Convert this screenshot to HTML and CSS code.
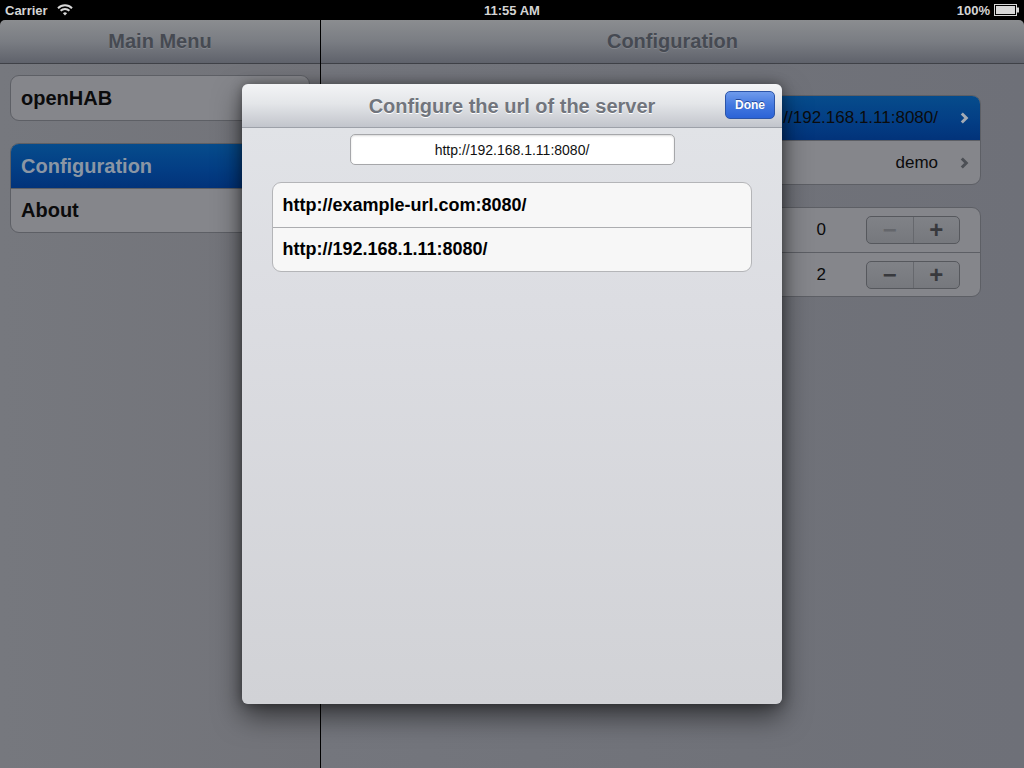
FILE: index.html
```html
<!DOCTYPE html>
<html>
<head>
<meta charset="utf-8">
<link rel="stylesheet" href="styles.css">
</head>
<body>
<div class="screen">
  <div class="statusbar">
    <div class="sb-left">
      <span>Carrier</span>
      <svg class="wifi" width="16" height="12" viewBox="0 0 16 12">
        <path d="M1 4.2 A10 10 0 0 1 15 4.2" fill="none" stroke="#d8d8d8" stroke-width="2"/>
        <path d="M3.6 6.8 A6.3 6.3 0 0 1 12.4 6.8" fill="none" stroke="#d8d8d8" stroke-width="2"/>
        <path d="M8 11.5 L5.9 9.2 A3 3 0 0 1 10.1 9.2 Z" fill="#d8d8d8"/>
      </svg>
    </div>
    <div class="sb-time">11:55 AM</div>
    <div class="sb-right">
      <span>100%</span>
      <svg class="battery" width="26" height="12" viewBox="0 0 26 12">
        <rect x="0.5" y="0.5" width="22" height="11" fill="none" stroke="#d8d8d8" stroke-width="1"/>
        <rect x="2" y="2" width="19" height="8" fill="#d8d8d8"/>
        <rect x="23" y="3.5" width="2" height="5" fill="#d8d8d8"/>
      </svg>
    </div>
  </div>
  <div class="main">
    <div class="pane left">
      <div class="navbar"><span class="navtitle">Main Menu</span></div>
      <div class="pane-body left-body">
        <div class="group">
          <div class="cell"><span class="cell-bold">openHAB</span></div>
        </div>
        <div class="group">
          <div class="cell selected"><span class="cell-bold sel-text">Configuration</span></div>
          <div class="cell"><span class="cell-bold">About</span></div>
        </div>
      </div>
    </div>
    <div class="divider"></div>
    <div class="pane right">
      <div class="navbar navbar-right"><span class="navtitle">Configuration</span></div>
      <div class="pane-body right-body">
        <div class="group rgroup">
          <div class="cell selected rcell">
            <span class="spacer"></span>
            <span class="cell-value">http://192.168.1.11:8080/</span>
            <svg class="chev" width="9" height="12" viewBox="0 0 9 12"><path d="M1.8 1.5 L6.3 6 L1.8 10.5" fill="none" stroke="#a3aab4" stroke-width="3"/></svg>
          </div>
          <div class="cell rcell">
            <span class="spacer"></span>
            <span class="cell-value">demo</span>
            <svg class="chev" width="9" height="12" viewBox="0 0 9 12"><path d="M1.8 1.5 L6.3 6 L1.8 10.5" fill="none" stroke="#4c4f55" stroke-width="3"/></svg>
          </div>
        </div>
        <div class="group rgroup">
          <div class="cell rcell">
            <span class="spacer"></span>
            <span class="cell-value num">0</span>
            <div class="stepper"><span class="st-btn dim">&minus;</span><span class="st-btn">+</span></div>
          </div>
          <div class="cell rcell">
            <span class="spacer"></span>
            <span class="cell-value num">2</span>
            <div class="stepper"><span class="st-btn">&minus;</span><span class="st-btn">+</span></div>
          </div>
        </div>
      </div>
    </div>
  </div>

  <div class="modal">
    <div class="modal-header">
      <span class="modal-title">Configure the url of the server</span>
      <span class="done">Done</span>
    </div>
    <div class="modal-body">
      <div class="field">http://192.168.1.11:8080/</div>
      <div class="mtable">
        <div class="mrow">http://example-url.com:8080/</div>
        <div class="mrow">http://192.168.1.11:8080/</div>
      </div>
    </div>
  </div>
</div>
</body>
</html>
```

FILE: styles.css
```css
* { box-sizing: border-box; }
html, body { margin: 0; padding: 0; }
body {
  width: 1024px;
  height: 768px;
  overflow: hidden;
  font-family: "Liberation Sans", Arial, sans-serif;
  background: #000;
}
.screen {
  position: relative;
  width: 1024px;
  height: 768px;
  display: flex;
  flex-direction: column;
}
.statusbar {
  height: 20px;
  background: #000;
  color: #d4d4d4;
  font-weight: bold;
  font-size: 13px;
  display: flex;
  align-items: center;
  justify-content: space-between;
  padding: 0 4px 0 5px;
  position: relative;
}
.sb-left { display: flex; align-items: center; gap: 9px; }
.wifi { margin-top: -1px; }
.sb-time {
  position: absolute;
  left: 0; right: 0;
  text-align: center;
  font-size: 13px;
}
.sb-right { display: flex; align-items: center; gap: 4px; }
.main {
  flex: 1;
  display: flex;
  background: #000;
}
.pane {
  display: flex;
  flex-direction: column;
}
.left { width: 320px; }
.divider { width: 1px; background: #000; }
.right { flex: 1; }
.navbar {
  height: 44px;
  background: linear-gradient(#8b8d90, #7a7d83 50%, #5f626b);
  border-bottom: 1px solid #3f4147;
  display: flex;
  align-items: center;
  justify-content: center;
  border-top-left-radius: 5px;
}
.navbar-right { border-top-left-radius: 0; border-top-right-radius: 5px; }
.navtitle {
  font-size: 20px;
  font-weight: bold;
  color: #464a52;
  text-shadow: 0 1px 0 rgba(160,162,168,0.4);
  margin-top: -1px;
}
.pane-body {
  flex: 1;
  background: #72747b;
}
.left-body {
  background: linear-gradient(90deg, #76787e, #727379);
  padding: 11px 10px 0 10px;
  display: flex;
  flex-direction: column;
  gap: 22px;
}
.right-body {
  background: linear-gradient(90deg, #74767d, #707279 60%, #6e7078);
  padding: 31px 43px 0 43px;
  display: flex;
  flex-direction: column;
  gap: 22px;
}
.group {
  border: 1px solid #5d5f65;
  border-radius: 9px;
  background: #85868b;
  overflow: hidden;
}
.cell {
  height: 44px;
  display: flex;
  align-items: center;
  padding: 0 10px;
  border-top: 1px solid #5d5f65;
}
.cell:first-child { border-top: none; }
.cell-bold {
  font-size: 20px;
  font-weight: bold;
  color: #0b0b0c;
}
.selected {
  background: linear-gradient(#064c8c, #033d84 60%, #02337a);
}
.sel-text { color: #8b96a4; }
.rcell { font-size: 17px; color: #0b0b0c; }
.spacer { flex: 1; }
.cell-value { margin-right: 22px; }
.chev { margin-right: 1px; }
.num { margin-right: 40px; }
.stepper {
  width: 94px;
  height: 28px;
  border: 1px solid #56585d;
  border-radius: 5px;
  display: flex;
  background: linear-gradient(#808287, #76787d);
  margin-right: 10px;
}
.st-btn {
  flex: 1;
  display: flex;
  align-items: center;
  justify-content: center;
  font-size: 24px;
  font-weight: bold;
  color: #38393d;
  line-height: 1;
}
.st-btn:first-child { border-right: 1px solid #66686d; }
.st-btn.dim { color: #64666b; }

/* modal */
.modal {
  position: absolute;
  left: 242px;
  top: 84px;
  width: 540px;
  height: 620px;
  border-radius: 6px;
  overflow: hidden;
  box-shadow: 0 12px 28px rgba(0,0,0,0.55), 0 0 12px rgba(0,0,0,0.35);
  display: flex;
  flex-direction: column;
}
.modal-header {
  height: 44px;
  background: linear-gradient(#f3f4f6, #e4e6e9 45%, #c2c5cc);
  border-bottom: 1px solid #9da1a9;
  display: flex;
  align-items: center;
  justify-content: center;
  position: relative;
}
.modal-title {
  font-size: 20px;
  font-weight: bold;
  color: #71757d;
  text-shadow: 0 1px 0 #fff;
  margin-top: 1px;
}
.done {
  position: absolute;
  right: 7px;
  top: 7px;
  width: 50px;
  height: 28px;
  border-radius: 5px;
  border: 1px solid #2c55a8;
  background: linear-gradient(#6f9bec, #4479e0 50%, #2c63d6);
  color: #fff;
  font-size: 12px;
  font-weight: bold;
  display: flex;
  align-items: center;
  justify-content: center;
  text-shadow: 0 -1px 0 #23489a;
}
.modal-body {
  flex: 1;
  background: linear-gradient(#e1e3e7, #dcdde2 30%, #d1d2d6);
  display: flex;
  flex-direction: column;
  align-items: center;
  padding-top: 6px;
}
.field {
  width: 325px;
  height: 31px;
  background: #fff;
  border: 1px solid #a6a7aa;
  border-radius: 5px;
  box-shadow: inset 0 1px 2px rgba(0,0,0,0.15);
  font-size: 14px;
  color: #111;
  display: flex;
  align-items: center;
  justify-content: center;
}
.mtable {
  width: 480px;
  margin-top: 17px;
  margin-left: -1px;
  background: #f7f7f7;
  border: 1px solid #b4b5b8;
  border-radius: 9px;
  overflow: hidden;
}
.mrow {
  height: 44px;
  display: flex;
  align-items: center;
  padding-left: 10px;
  font-size: 18px;
  font-weight: bold;
  color: #000;
  border-top: 1px solid #acadb0;
}
.mrow:first-child { border-top: none; }
```
